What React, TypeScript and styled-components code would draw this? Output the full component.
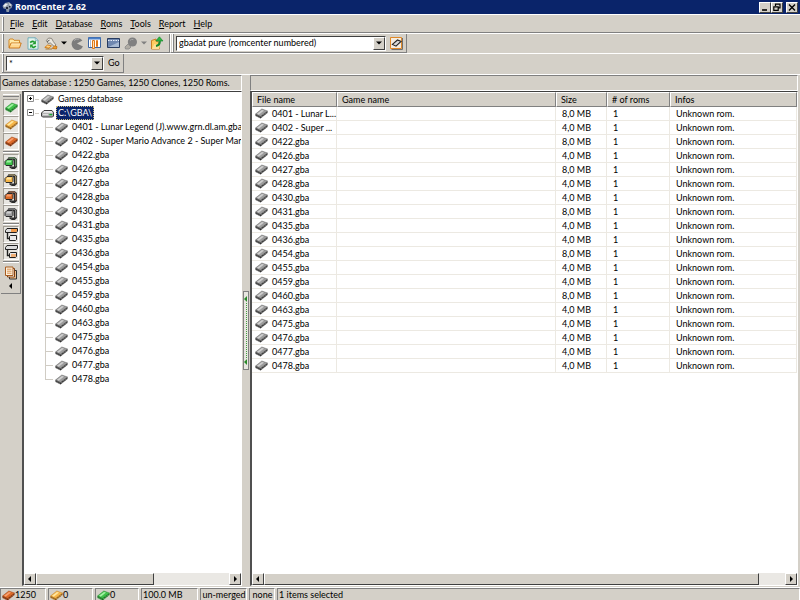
import React from "react";
import styled, { createGlobalStyle, css } from "styled-components";

const GlobalStyle = createGlobalStyle`
  * { box-sizing: border-box; }
  html, body { margin: 0; padding: 0; background: #d4d0c8; }
  body, button, input, select, table {
    font-family: Lato, "Liberation Sans", Arial, sans-serif;
    font-size: 9px;
    line-height: 12px;
    color: #000;
  }
  button, input, select { margin: 0; padding: 0; border: 0; background: none; outline: none; }
  svg { flex: none; }
`;

const face = "#d4d0c8";
const shadow = "#808080";
const navy = "#0a246a";

const Window = styled.div`
  display: flex;
  flex-direction: column;
  height: 100vh;
  background: ${face};
  overflow: hidden;
`;

/* ---------- title bar ---------- */

const TitleBar = styled.header`
  display: flex;
  align-items: center;
  flex: none;
  height: 14px;
  padding: 0 2px;
  gap: 2px;
  background: ${navy};
`;

const Title = styled.h1`
  flex: 1;
  margin: 0;
  font-family: "Open Sans", "Noto Sans", sans-serif;
  font-size: 9px;
  line-height: 14px;
  font-weight: bold;
  color: #fff;
`;

const CaptionButtons = styled.div`
  display: flex;
`;

const CaptionButton = styled.button<{ $apart?: boolean }>`
  display: flex;
  width: 12px;
  height: 11px;
  margin-left: ${(p) => (p.$apart ? "3px" : "0")};
  background: ${face};
  border: 1px solid;
  border-color: #fff #404040 #404040 #fff;
`;

/* ---------- menu and tool bars ---------- */

const Grip = styled.span`
  flex: none;
  width: 2px;
  align-self: stretch;
  margin-right: 2px;
  border-left: 1px solid #fff;
  border-right: 1px solid ${shadow};
`;

const MenuBar = styled.nav`
  display: flex;
  align-items: center;
  flex: none;
  height: 19px;
  padding: 2px 2px 1px;
  border-top: 1px solid #fff;
  border-bottom: 1px solid ${shadow};
`;

const MenuItem = styled.button`
  height: 14px;
  padding: 0 4px;
  &:first-letter { text-decoration: underline; }
`;

const ToolRow = styled.div`
  display: flex;
  flex: none;
  height: 20px;
  padding-left: 2px;
  border-top: 1px solid #fff;
`;

const Band = styled.div`
  display: flex;
  align-items: center;
  padding-right: 3px;
  border-right: 1px solid ${shadow};
  border-bottom: 1px solid ${shadow};
  & + & { padding-left: 1px; border-left: 1px solid #fff; }
`;

const ToolButton = styled.button<{ $narrow?: boolean }>`
  display: flex;
  align-items: center;
  justify-content: center;
  width: ${(p) => (p.$narrow ? "8px" : "18px")};
  height: 17px;
`;

const GoButton = styled.button`
  height: 15px;
  padding: 0 0 0 4px;
`;

const Combo = styled.div<{ $wide?: boolean }>`
  position: relative;
  display: flex;
  width: ${(p) => (p.$wide ? "210px" : "98px")};
  height: 15px;
  background: #fff;
  border: 1px solid;
  border-color: #404040 #fff #fff #404040;
`;

const comboText = css`
  flex: 1;
  min-width: 0;
  height: 13px;
  padding: 0 13px 0 2px;
  background: transparent;
`;

const ComboSelect = styled.select`
  ${comboText}
  appearance: none;
`;

const ComboInput = styled.input`
  ${comboText}
`;

const ComboArrow = styled.span`
  position: absolute;
  top: 0;
  right: 0;
  display: flex;
  align-items: center;
  justify-content: center;
  width: 12px;
  height: 13px;
  pointer-events: none;
  background: ${face};
  border: 1px solid;
  border-color: #fff #404040 #404040 #fff;
`;

const DatButton = styled.button`
  display: flex;
  align-items: center;
  justify-content: center;
  width: 14px;
  height: 14px;
  margin-left: 3px;
`;

/* ---------- work area ---------- */

const WorkArea = styled.main`
  display: flex;
  flex: 1;
  min-height: 0;
  margin-top: 1px;
  border-top: 1px solid #fff;
`;

const LeftPane = styled.section`
  display: flex;
  flex-direction: column;
  flex: none;
  width: 242px;
`;

const RightPane = styled.section`
  display: flex;
  flex-direction: column;
  flex: 1;
  min-width: 0;
  margin-right: 2px;
`;

const PaneHeader = styled.h2`
  flex: none;
  height: 16px;
  margin: 0;
  padding: 0 1px;
  font-size: 9px;
  font-weight: normal;
  line-height: 14px;
  white-space: nowrap;
  border: 1px solid;
  border-color: ${shadow} #fff #fff ${shadow};
`;

const LeftBody = styled.div`
  display: flex;
  flex: 1;
  min-height: 0;
`;

const SunkenBox = styled.div`
  display: flex;
  flex-direction: column;
  flex: 1;
  min-width: 0;
  min-height: 0;
  background: #fff;
  border: 1px solid;
  border-width: 1px 1px 1px 2px;
  border-color: #404040 #fff #fff #505050;
`;

const SideBar = styled.div`
  display: flex;
  flex-direction: column;
  flex: none;
  align-self: flex-start;
  width: 20px;
  margin: 3px 1px 0 1px;
  padding: 0 1px 2px 2px;
  border-right: 1px solid ${shadow};
  border-bottom: 1px solid ${shadow};
`;

const SideGrip = styled.span`
  height: 3px;
  margin-bottom: 2px;
  border-top: 1px solid #fff;
  border-bottom: 1px solid ${shadow};
`;

const SideDivider = styled.span`
  height: 2px;
  margin: 1px 0;
  border-top: 1px solid ${shadow};
  border-bottom: 1px solid #fff;
`;

const SideButton = styled.button<{ $tall?: boolean; $flat?: boolean }>`
  display: flex;
  flex-direction: column;
  align-items: center;
  justify-content: center;
  gap: 3px;
  height: ${(p) => (p.$tall ? "27px" : "17px")};
  ${(p) =>
    !p.$flat &&
    css`
      background: #e8e6e1;
      border: 1px solid;
      border-color: #a09c94 #fff #fff #a09c94;
    `}
`;

/* ---------- tree ---------- */

const Tree = styled.ul`
  flex: 1;
  min-height: 0;
  margin: 0;
  padding: 0 0 0 3px;
  list-style: none;
  overflow: hidden;
`;

const Branch = styled.ul`
  position: relative;
  margin: 0;
  padding: 0 0 0 18px;
  list-style: none;
  &::before {
    content: "";
    position: absolute;
    left: 18px;
    top: 0;
    bottom: 7px;
    border-left: 1px solid #d0ccc4;
  }
`;

const TreeRow = styled.div`
  display: flex;
  align-items: center;
  height: 14px;
  white-space: nowrap;
`;

const Expander = styled.button`
  display: flex;
  flex: none;
  width: 8px;
  height: 8px;
`;

const Twig = styled.span<{ $long?: boolean }>`
  flex: none;
  width: ${(p) => (p.$long ? "8px" : "4px")};
  margin-right: 2px;
  border-top: 1px solid #d0ccc4;
`;

const TreeLabel = styled.span<{ $selected?: boolean }>`
  height: 14px;
  padding: 0 2px;
  margin-left: 2px;
  line-height: 14px;
  ${(p) =>
    p.$selected &&
    css`
      color: #fff;
      background: ${navy};
      outline: 1px dotted #c8b878;
      outline-offset: -1px;
    `}
`;

/* ---------- splitter ---------- */

const Splitter = styled.div`
  display: flex;
  align-items: center;
  justify-content: center;
  flex: none;
  width: 8px;
`;

const SplitterHandle = styled.button`
  display: flex;
  flex-direction: column;
  align-items: center;
  justify-content: space-between;
  width: 6px;
  height: 79px;
  padding: 4px 0;
  background: #e8e6e0;
  border: 1px solid ${shadow};
`;

const SplitterDots = styled.span`
  flex: 1;
  margin: 1px 0;
  border-left: 1px dotted #3f9f3f;
`;

/* ---------- list ---------- */

const ListArea = styled.div`
  flex: 1;
  min-height: 0;
  overflow: hidden;
`;

const Table = styled.table`
  width: 100%;
  table-layout: fixed;
  border-collapse: separate;
  border-spacing: 0;
`;

const Col = styled.col<{ $w?: number }>`
  width: ${(p) => (p.$w ? `${p.$w}px` : "auto")};
`;

const Th = styled.th`
  height: 15px;
  padding: 0 4px;
  font-weight: normal;
  text-align: left;
  background: ${face};
  border: 1px solid;
  border-color: #fff ${shadow} ${shadow} #fff;
`;

const Td = styled.td`
  height: 14px;
  padding: 0 6px;
  white-space: nowrap;
  border-right: 1px solid #ece9e2;
  border-bottom: 1px solid #ece9e2;
`;

const FileCell = styled.div`
  display: flex;
  align-items: center;
  gap: 4px;
  margin: 0 -6px 0 -3px;
`;

/* ---------- scroll bar ---------- */

const ScrollBar = styled.div`
  display: flex;
  flex: none;
  height: 12px;
  background: #eae8e4;
`;

const raised = css`
  background: ${face};
  border: 1px solid;
  border-color: #fff #404040 #404040 #fff;
`;

const ScrollButton = styled.button`
  display: flex;
  align-items: center;
  justify-content: center;
  flex: none;
  width: 12px;
  ${raised}
`;

const ScrollTrack = styled.div`
  flex: 1;
`;

const ScrollThumb = styled.div<{ $share: number }>`
  width: ${(p) => p.$share}%;
  height: 12px;
  ${raised}
`;

/* ---------- status bar ---------- */

const StatusBar = styled.footer`
  display: flex;
  flex: none;
  height: 13px;
  margin-top: 1px;
  gap: 2px;
  border-top: 1px solid #fff;
  overflow: hidden;
`;

const StatusCell = styled.div<{ $w?: number; $center?: boolean }>`
  display: flex;
  align-items: center;
  justify-content: ${(p) => (p.$center ? "center" : "flex-start")};
  flex: ${(p) => (p.$w ? `0 0 ${p.$w}px` : "1")};
  height: 14px;
  padding-left: 1px;
  white-space: nowrap;
  border: 1px solid;
  border-color: ${shadow} #fff #fff ${shadow};
`;

/* ---------- icons ---------- */

type Tone = { top: string; light: string; side: string; edge: string };

const tones: Record<string, Tone> = {
  grey: { top: "#9c9c9c", light: "#d0d0d0", side: "#303030", edge: "#606060" },
  green: { top: "#3fc24a", light: "#a4f0a4", side: "#1a6a24", edge: "#2a8a34" },
  yellow: { top: "#f6b648", light: "#ffe6a0", side: "#8a5414", edge: "#c08028" },
  red: { top: "#dc6a28", light: "#f8a070", side: "#702c0c", edge: "#a04414" },
};

const Chip = ({ tone = "grey" }: { tone?: string }) => {
  const t = tones[tone];
  return (
    <svg width="13" height="11" viewBox="0 0 13 11" aria-hidden="true">
      <path d="M0.5 6 L0.5 8 L5.5 10.6 L12.5 5 L12.5 3 Z" fill={t.side} />
      <path d="M0.5 6 L6.8 1 L12.5 3 L5.6 8.4 Z" fill={t.top} stroke={t.edge} strokeWidth="0.5" />
      <path d="M2 5.8 L7 1.9 L9 2.6 L3.8 6.7 Z" fill={t.light} />
      <path d="M2 7.6v1.4M4 8.6v1.4M7 8v1.2M9 6.4v1.2M11 4.8v1.2" stroke={t.light} strokeWidth="0.7" />
    </svg>
  );
};

const Drive = () => (
  <svg width="13" height="11" viewBox="0 0 13 11" aria-hidden="true">
    <path d="M3 2.5h8l1.5 2v3.5l-1 1h-10l-1-1v-3z" fill="#b4b4b4" stroke="#3c3c3c" />
    <path d="M3.4 3h7.2l1 1.8h-9.8z" fill="#ececec" />
    <path d="M2 6.6h5" stroke="#e4e4e4" />
    <path d="M8.3 6.6h3" stroke="#18b030" strokeWidth="1.4" />
  </svg>
);

const Clamp = ({ tone }: { tone: string }) => {
  const t = tones[tone];
  return (
    <svg width="14" height="14" viewBox="0 0 14 14" aria-hidden="true">
      <path d="M3 3.4 L4.8 1 H10.5 L13 3 V11 L10.8 13 H7.6 V10.6 H10 V5 L9 3.8 Z" fill="#2c2c2c" />
      <path d="M4.6 2.6 L5.4 2 H10.2 L11.8 3.4 V10.4" fill="none" stroke={t.light} strokeWidth="0.8" />
      <path d="M1 5.5 L3 3.5 H8 L9 4.5 V8.5 L8 9.5 H2 L1 8.5 Z" fill={t.top} stroke="#2a2a2a" />
      <path d="M2 6.4 L3.4 4.4 H7.6 L6.8 6.4 Z" fill={t.light} />
      <path d="M5.4 10.2 H7.8 V13 L5.4 11.6 Z" fill="#2a2a2a" />
    </svg>
  );
};

const Struct = ({ upper }: { upper?: boolean }) => (
  <svg width="13" height="14" viewBox="0 0 13 14" aria-hidden="true">
    <path d="M0.5 2.5 L2 0.5 H12.5 V3 L11.5 4.5 H0.5 Z" fill="#dcdcdc" stroke="#202020" />
    {upper && <path d="M6 1h6v2l-0.8 1H6z" fill="#f09848" />}
    <path d="M2.5 5v5.5h2" fill="none" stroke="#202020" strokeWidth="1.4" />
    <path d="M4.5 8.5 L5.5 7.5 H11.5 V11.5 L10.5 12.5 H4.5 Z" fill="#e8e8e8" stroke="#202020" />
    {!upper && <path d="M6 9h5v2.4l-0.6 0.6H6z" fill="#f0b078" />}
  </svg>
);

const Pages = () => (
  <svg width="14" height="14" viewBox="0 0 14 14" aria-hidden="true">
    <path d="M5.5 4.5h7v8.5h-7z" fill="#f0c090" stroke="#333" />
    <path d="M3.5 2.5h7v8.5h-7z" fill="#fff" stroke="#804010" />
    <path d="M1.5 1h7.5v8.5h-7.5z" fill="#fdf0dc" stroke="#a85a1c" />
    <path d="M3 3.2h4.5M3 5.2h4.5M3 7.2h4.5" stroke="#d89050" />
  </svg>
);

const Triangle = ({ dir, color = "#000" }: { dir: "left" | "right" | "down" | "up"; color?: string }) => {
  const d = { left: "M4 0v6L1 3z", right: "M2 0v6L5 3z", down: "M0 1.5h6L3 4.5z", up: "M0 4.5h6L3 1.5z" }[dir];
  return (
    <svg width="6" height="6" viewBox="0 0 6 6" aria-hidden="true">
      <path d={d} fill={color} />
    </svg>
  );
};

const AppIcon = () => (
  <svg width="11" height="12" viewBox="0 0 11 12" aria-hidden="true">
    <path d="M0.5 5 L3 2 L7 1 L10.5 4 L9.5 7 L7.5 8 L7 11 L4.5 11 L4 8 L1.5 7.5 Z" fill="#8c98a8" />
    <path d="M1 5 L3.5 2.5 L6 3 L3 6 Z M7 2 L9.5 4 L8 5 Z" fill="#e8ecf0" />
    <path d="M4 6h2v2h-2z M7 5h1.5v1.5h-1.5z" fill="#20283c" />
  </svg>
);

const Folder = () => (
  <svg width="14" height="13" viewBox="0 0 14 13" aria-hidden="true">
    <path d="M1 10.5V2.8L2 2h3l1 1.3h5.5V6" fill="#ffe9a8" stroke="#d08018" strokeWidth="0.9" />
    <path d="M1 11 L3 6 H13.2 L11.5 11 Z" fill="#ffd890" stroke="#c87010" strokeWidth="0.9" />
    <path d="M3.5 7h8.6" stroke="#fff4d0" strokeWidth="0.8" />
  </svg>
);

const RefreshDoc = () => (
  <svg width="12" height="13" viewBox="0 0 12 13" aria-hidden="true">
    <path d="M1 0.8h7.5l2.5 2.6v8.8h-10z" fill="#e4f4ec" stroke="#68a8b8" strokeWidth="0.9" />
    <path d="M8.3 0.8v2.8H11z" fill="#fff" stroke="#78a8b8" strokeWidth="0.7" />
    <path d="M3.2 5.6 Q5.4 3.2 7.4 5.2" fill="none" stroke="#1c9a2c" strokeWidth="1.7" />
    <path d="M8.9 3.6v3.6h-3.6z" fill="#1c9a2c" />
    <path d="M8.8 9 Q6.6 11.4 4.6 9.4" fill="none" stroke="#1c9a2c" strokeWidth="1.7" />
    <path d="M3.1 11v-3.6h3.6z" fill="#1c9a2c" />
  </svg>
);

const Wrench = () => (
  <svg width="14" height="13" viewBox="0 0 14 13" aria-hidden="true">
    <path d="M2.4 3.4 L4.6 1 L7.6 1.4 L9.4 4.6 L12 8 L10.4 9.6 L6.4 6 L4 6.4 Z" fill="#ece8e0" stroke="#807c74" strokeWidth="0.9" />
    <path d="M3 4.6 L5.5 3.2" stroke="#555" />
    <path d="M0.8 10.4 L3.6 8 L7.4 8.8 L5 11.2 Z" fill="#ffd080" stroke="#d07810" strokeWidth="0.9" />
    <path d="M8.2 11.4 L10.6 8.8 L13 9.6 L12.4 12 Z" fill="#f0a030" stroke="#c06808" strokeWidth="0.8" />
    <path d="M1.5 12h6.5" stroke="#9c6418" strokeWidth="0.8" />
  </svg>
);

const PacGrey = () => (
  <svg width="13" height="13" viewBox="0 0 13 13" aria-hidden="true">
    <path d="M6 6.5 L11.4 3.4 A6 6 0 1 0 12 9.6 Z" fill="#7c7c7c" />
    <path d="M3 3.5 Q5 1.5 8 2" fill="none" stroke="#b0b0b0" />
  </svg>
);

const Columns = () => (
  <svg width="14" height="12" viewBox="0 0 14 12" aria-hidden="true">
    <path d="M0.5 0.5h12v10h-12z" fill="#fff" stroke="#3c64a0" />
    <path d="M0.5 0.5h12v2h-12z" fill="#4c80c8" />
    <path d="M4.5 3.5h2v8h-2zM8.5 3.5h1v6h-1z" fill="#fbe0b8" stroke="#e07818" />
    <path d="M2.5 3v7" stroke="#a8bcd8" />
  </svg>
);

const Panel = () => (
  <svg width="13" height="11" viewBox="0 0 13 11" aria-hidden="true">
    <path d="M0.5 0.5h12v9h-12z" fill="#7088b0" stroke="#283c60" />
    <path d="M1 2.5h11" stroke="#e8eef8" strokeDasharray="1.5 1" />
    <path d="M1.5 9 L12 4v5z" fill="#a8bad4" />
  </svg>
);

const Bulb = () => (
  <svg width="14" height="13" viewBox="0 0 14 13" aria-hidden="true">
    <circle cx="8.4" cy="5" r="4.6" fill="#808080" />
    <path d="M1 10 L4 7 L7 10 L5 12 L1.5 12 Z" fill="#b0aca4" stroke="#888" strokeWidth="0.8" />
    <path d="M6 3.4 Q7.4 1.8 9.4 2.6" fill="none" stroke="#a8a8a8" />
  </svg>
);

const Export = () => (
  <svg width="14" height="14" viewBox="0 0 14 14" aria-hidden="true">
    <path d="M1.5 13 V4.5 L6 3 V5 L9.5 6.5 V13 Z" fill="#ffcc60" stroke="#c87818" strokeWidth="0.9" />
    <path d="M1.8 13 L4.4 8 L10 9 L9.2 13 Z" fill="#ffe098" />
    <path d="M6 10 Q10 9.5 9.7 5.2" fill="none" stroke="#18882c" strokeWidth="2.2" />
    <path d="M5.8 5 L9.4 0.8 L13 5 Z" fill="#2cb840" stroke="#18882c" strokeWidth="0.7" />
  </svg>
);

const DatIcon = () => (
  <svg width="13" height="13" viewBox="0 0 13 13" aria-hidden="true">
    <path d="M0.5 0.5h11v11h-11z" fill="#f4ece0" stroke="#e08828" />
    <path d="M12.5 1v11.5h-11" fill="none" stroke="#707070" />
    <path d="M2.4 7.4 L7.5 3 L11 4.4 L6 9.2 Z" fill="#d8d8d8" stroke="#222" strokeWidth="1.1" />
  </svg>
);

const CaptionGlyph = ({ kind }: { kind: "min" | "restore" | "close" }) => (
  <svg width="10" height="9" viewBox="0 0 10 9" aria-hidden="true">
    {kind === "min" && <path d="M2 7h5" stroke="#000" strokeWidth="1.6" />}
    {kind === "restore" && (
      <path d="M3.5 3V1.2h4.5v3.6H6.5M1.8 3.8h4.4v3.6H1.8z" fill="none" stroke="#000" strokeWidth="1.2" />
    )}
    {kind === "close" && <path d="M2 1.5l6 6M8 1.5l-6 6" stroke="#000" strokeWidth="1.4" />}
  </svg>
);

const ExpandGlyph = ({ open }: { open?: boolean }) => (
  <svg width="8" height="8" viewBox="0 0 8 8" aria-hidden="true">
    <path d="M0.5 0.5h6v6h-6z" fill="#fff" stroke="#8c8c8c" />
    <path d={open ? "M2 3.5h3" : "M2 3.5h3M3.5 2v3"} stroke="#000" />
  </svg>
);

/* ---------- data ---------- */

const menus = ["File", "Edit", "Database", "Roms", "Tools", "Report", "Help"];

const files: { name: string; short?: string; size: string }[] = [
  { name: "0401 - Lunar Legend (J).www.grn.dl.am.gba", short: "0401 - Lunar L...", size: "8,0 MB" },
  { name: "0402 - Super Mario Advance 2 - Super Mario W", short: "0402 - Super ...", size: "4,0 MB" },
  { name: "0422.gba", size: "8,0 MB" },
  { name: "0426.gba", size: "4,0 MB" },
  { name: "0427.gba", size: "8,0 MB" },
  { name: "0428.gba", size: "4,0 MB" },
  { name: "0430.gba", size: "4,0 MB" },
  { name: "0431.gba", size: "8,0 MB" },
  { name: "0435.gba", size: "4,0 MB" },
  { name: "0436.gba", size: "4,0 MB" },
  { name: "0454.gba", size: "8,0 MB" },
  { name: "0455.gba", size: "4,0 MB" },
  { name: "0459.gba", size: "4,0 MB" },
  { name: "0460.gba", size: "8,0 MB" },
  { name: "0463.gba", size: "4,0 MB" },
  { name: "0475.gba", size: "4,0 MB" },
  { name: "0476.gba", size: "4,0 MB" },
  { name: "0477.gba", size: "4,0 MB" },
  { name: "0478.gba", size: "4,0 MB" },
];

const HorizontalScroll = ({ share }: { share: number }) => (
  <ScrollBar>
    <ScrollButton aria-label="Scroll left"><Triangle dir="left" /></ScrollButton>
    <ScrollTrack><ScrollThumb $share={share} /></ScrollTrack>
    <ScrollButton aria-label="Scroll right"><Triangle dir="right" /></ScrollButton>
  </ScrollBar>
);

export default function App() {
  return (
    <Window>
      <GlobalStyle />
      <TitleBar>
        <AppIcon />
        <Title>RomCenter 2.62</Title>
        <CaptionButtons>
          <CaptionButton aria-label="Minimize"><CaptionGlyph kind="min" /></CaptionButton>
          <CaptionButton aria-label="Restore"><CaptionGlyph kind="restore" /></CaptionButton>
          <CaptionButton aria-label="Close" $apart><CaptionGlyph kind="close" /></CaptionButton>
        </CaptionButtons>
      </TitleBar>

      <MenuBar>
        <Grip />
        {menus.map((m) => (
          <MenuItem key={m}>{m}</MenuItem>
        ))}
      </MenuBar>

      <ToolRow>
        <Band>
          <Grip />
          <ToolButton aria-label="Open"><Folder /></ToolButton>
          <ToolButton aria-label="Refresh"><RefreshDoc /></ToolButton>
          <ToolButton aria-label="Fix"><Wrench /></ToolButton>
          <ToolButton aria-label="Fix options" $narrow><Triangle dir="down" /></ToolButton>
          <ToolButton aria-label="Stop"><PacGrey /></ToolButton>
          <ToolButton aria-label="Columns"><Columns /></ToolButton>
          <ToolButton aria-label="Panel"><Panel /></ToolButton>
          <ToolButton aria-label="Hints"><Bulb /></ToolButton>
          <ToolButton aria-label="Hint options" $narrow><Triangle dir="down" color="#808080" /></ToolButton>
          <ToolButton aria-label="Export"><Export /></ToolButton>
        </Band>
        <Band>
          <Grip />
          <Combo $wide>
            <ComboSelect aria-label="Datafile">
              <option>gbadat pure (romcenter numbered)</option>
            </ComboSelect>
            <ComboArrow><Triangle dir="down" /></ComboArrow>
          </Combo>
          <DatButton aria-label="Datafile properties"><DatIcon /></DatButton>
        </Band>
      </ToolRow>

      <ToolRow>
        <Band>
          <Grip />
          <Combo>
            <ComboInput aria-label="Filter" defaultValue="*" />
            <ComboArrow><Triangle dir="down" /></ComboArrow>
          </Combo>
          <GoButton>Go</GoButton>
        </Band>
      </ToolRow>

      <WorkArea>
        <LeftPane>
          <PaneHeader>Games database : 1250 Games, 1250 Clones, 1250 Roms.</PaneHeader>
          <LeftBody>
            <SideBar>
              <SideGrip />
              <SideButton aria-label="Show good roms"><Chip tone="green" /></SideButton>
              <SideButton aria-label="Show fixable roms"><Chip tone="yellow" /></SideButton>
              <SideButton aria-label="Show missing roms"><Chip tone="red" /></SideButton>
              <SideDivider />
              <SideButton aria-label="Show good files"><Clamp tone="green" /></SideButton>
              <SideButton aria-label="Show fixable files"><Clamp tone="yellow" /></SideButton>
              <SideButton aria-label="Show bad files"><Clamp tone="red" /></SideButton>
              <SideButton aria-label="Show unknown files"><Clamp tone="grey" /></SideButton>
              <SideDivider />
              <SideButton aria-label="Show parents"><Struct upper /></SideButton>
              <SideButton aria-label="Show clones"><Struct /></SideButton>
              <SideDivider />
              <SideButton aria-label="Views" $tall $flat><Pages /><Triangle dir="left" /></SideButton>
            </SideBar>
            <SunkenBox>
              <Tree>
                <li>
                  <TreeRow>
                    <Expander aria-label="Expand"><ExpandGlyph /></Expander>
                    <Twig />
                    <Chip />
                    <TreeLabel>Games database</TreeLabel>
                  </TreeRow>
                </li>
                <li>
                  <TreeRow>
                    <Expander aria-label="Collapse"><ExpandGlyph open /></Expander>
                    <Twig />
                    <Drive />
                    <TreeLabel $selected>C:\GBA\</TreeLabel>
                  </TreeRow>
                  <Branch>
                    {files.map((f) => (
                      <li key={f.name}>
                        <TreeRow>
                          <Twig $long />
                          <Chip />
                          <TreeLabel>{f.name}</TreeLabel>
                        </TreeRow>
                      </li>
                    ))}
                  </Branch>
                </li>
              </Tree>
              <HorizontalScroll share={61} />
            </SunkenBox>
          </LeftBody>
        </LeftPane>

        <Splitter>
          <SplitterHandle aria-label="Collapse pane">
            <Triangle dir="left" color="#2a8a2a" />
            <SplitterDots />
            <Triangle dir="left" color="#2a8a2a" />
          </SplitterHandle>
        </Splitter>

        <RightPane>
          <PaneHeader />
          <SunkenBox>
            <ListArea>
              <Table>
                <colgroup>
                  <Col $w={85} />
                  <Col $w={219} />
                  <Col $w={51} />
                  <Col $w={63} />
                  <Col />
                </colgroup>
                <thead>
                  <tr>
                    <Th>File name</Th>
                    <Th>Game name</Th>
                    <Th>Size</Th>
                    <Th># of roms</Th>
                    <Th>Infos</Th>
                  </tr>
                </thead>
                <tbody>
                  {files.map((f) => (
                    <tr key={f.name}>
                      <Td>
                        <FileCell>
                          <Chip />
                          {f.short ?? f.name}
                        </FileCell>
                      </Td>
                      <Td />
                      <Td>{f.size}</Td>
                      <Td>1</Td>
                      <Td>Unknown rom.</Td>
                    </tr>
                  ))}
                </tbody>
              </Table>
            </ListArea>
            <HorizontalScroll share={95} />
          </SunkenBox>
        </RightPane>
      </WorkArea>

      <StatusBar>
        <StatusCell $w={46}><Chip tone="red" />1250</StatusCell>
        <StatusCell $w={45}><Chip tone="yellow" />0</StatusCell>
        <StatusCell $w={44}><Chip tone="green" />0</StatusCell>
        <StatusCell $w={57}>100.0 MB</StatusCell>
        <StatusCell $w={47} $center>un-merged</StatusCell>
        <StatusCell $w={26} $center>none</StatusCell>
        <StatusCell>1 items selected</StatusCell>
      </StatusBar>
    </Window>
  );
}
